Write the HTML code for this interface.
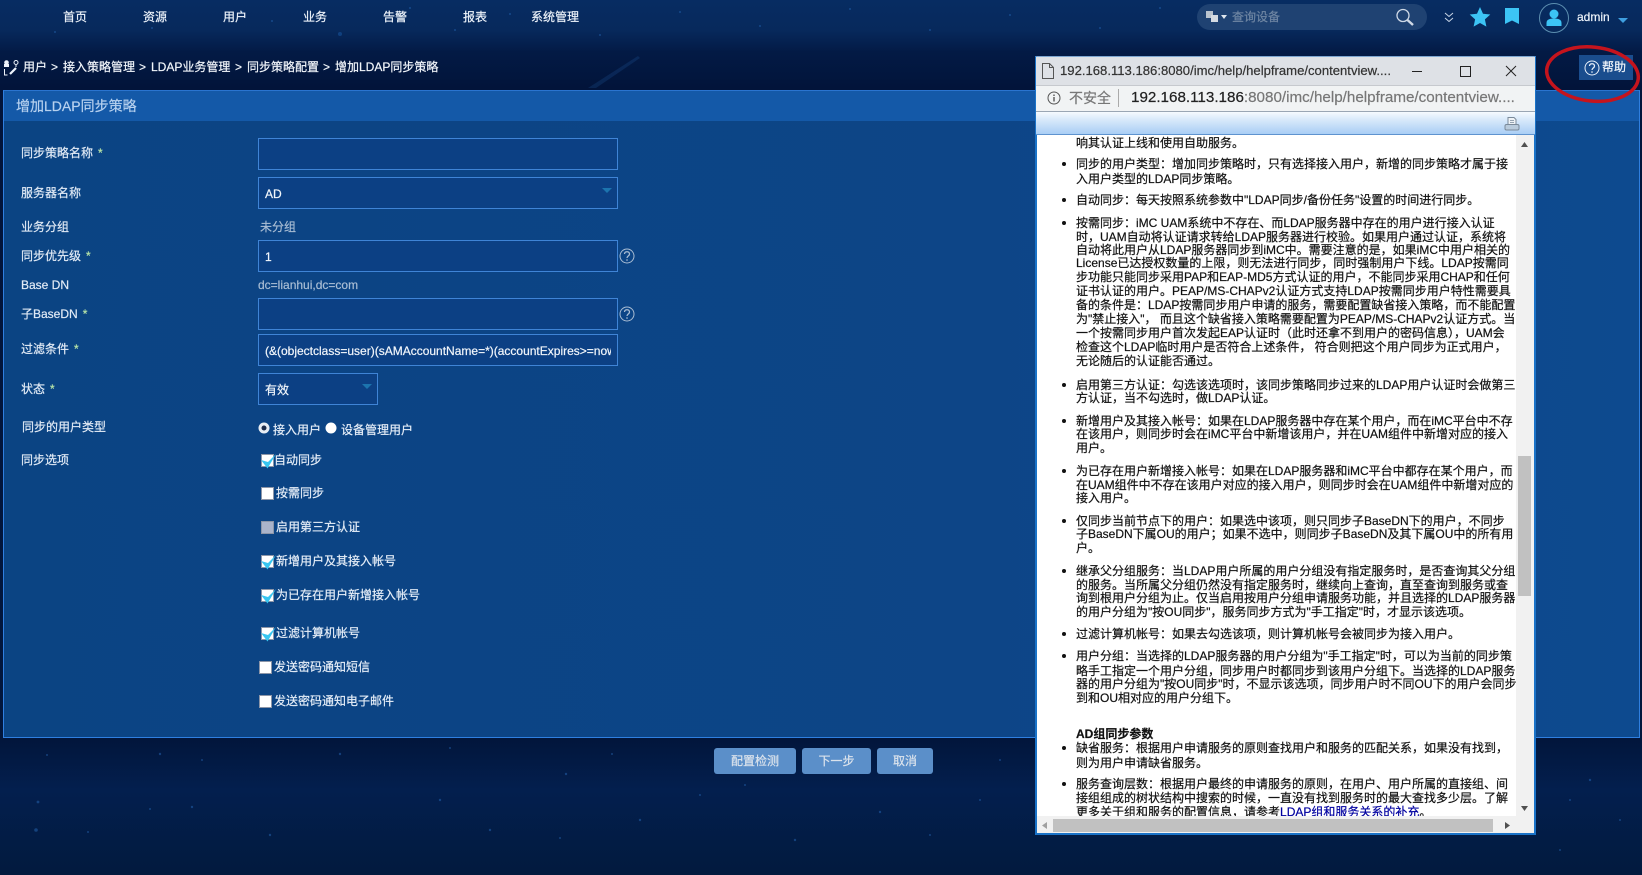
<!DOCTYPE html>
<html lang="zh"><head><meta charset="utf-8"><title>增加LDAP同步策略</title>
<style>
*{box-sizing:border-box}
html,body{margin:0;padding:0;width:1642px;height:875px;overflow:hidden;background:#02193d}
body{position:relative;font:12px/14px "Liberation Sans","Noto Sans CJK SC",sans-serif;color:#e6eef8;-webkit-text-stroke:.2px}
.a{position:absolute;white-space:nowrap}
#bg{position:absolute;left:0;top:0;width:1642px;height:875px;background:linear-gradient(180deg,#072c62 0,#07295c 30px,#031a45 52px,#02143a 88px,#02163c 740px,#031f4e 790px,#021a3e 875px)}
.t{position:absolute;white-space:nowrap;height:14px;line-height:14px;transform:translateY(-7px)}
.nav{width:80px;text-align:center;color:#eef4fb;top:17px}
.lab{left:21px;color:#e2ebf6}
.lab i{font-style:normal;color:#b9e6a8;margin-left:5px}
.in{position:absolute;left:258px;width:360px;height:32px;border:1px solid #3f84d6;background:#0c4084;color:#f2f6fb;padding:0 6px;line-height:33px;overflow:hidden;white-space:nowrap}
.caret{position:absolute;width:0;height:0;border-left:5px solid transparent;border-right:5px solid transparent;border-top:5px solid #1c74ae}
.ck{position:absolute;width:13px;height:13px;background:#fff;border:1px solid #8d96a8}
.ck svg{position:absolute;left:-1px;top:-1px}
.btn{position:absolute;top:748px;height:26px;background:#5b8fc9;border-radius:3px;color:#dbe3ec;text-align:center;line-height:26px}
#win{position:absolute;left:1035px;top:56px;width:501px;height:779px;background:#fff;border:2px solid #1a73c8;border-top:1px solid #7ea6d0;overflow:hidden}
#help{position:absolute;left:1037px;top:135px;width:479px;height:681px;overflow:hidden;background:#fff;color:#111;font:12px/14px "Liberation Sans","WenQuanYi Zen Hei","Noto Sans CJK SC",sans-serif}
#help div{position:absolute;left:39px;white-space:nowrap;height:14px;line-height:14px}
#help div.b:before{content:"";position:absolute;left:-14px;top:5px;width:4px;height:4px;border-radius:50%;background:#111}
</style></head><body>
<div id="bg"></div>
<svg class="a" style="left:0;top:0;opacity:.45" width="1642" height="875" fill="#2a6fc0">
<polygon points="588,88 596,88 640,58 638,56" fill="#2b74c4" opacity=".4"/>
<circle cx="340" cy="34" r="2" fill="#1c5fae"/><circle cx="272" cy="21" r="1"/><circle cx="152" cy="28" r="1"/><circle cx="55" cy="32" r="1"/><circle cx="242" cy="12" r="1"/><circle cx="410" cy="8" r="1"/><circle cx="455" cy="30" r="1"/><circle cx="510" cy="14" r="1"/><circle cx="600" cy="35" r="1"/><circle cx="680" cy="12" r="1"/><circle cx="760" cy="26" r="1"/><circle cx="850" cy="9" r="1"/><circle cx="930" cy="30" r="1"/><circle cx="1010" cy="15" r="1"/><circle cx="1100" cy="28" r="1"/><circle cx="1160" cy="8" r="1"/>
<circle cx="47" cy="755" r="1"/><circle cx="160" cy="754" r="1.2"/><circle cx="202" cy="760" r="1"/><circle cx="340" cy="754" r="1.2"/><circle cx="450" cy="748" r="1"/><circle cx="612" cy="754" r="1"/><circle cx="566" cy="774" r="1.2"/><circle cx="700" cy="795" r="1"/><circle cx="745" cy="785" r="1"/><circle cx="38" cy="802" r="1.4"/><circle cx="150" cy="809" r="1"/><circle cx="192" cy="807" r="1.2"/><circle cx="36" cy="830" r="1.8"/><circle cx="88" cy="832" r="1"/><circle cx="270" cy="835" r="1.2"/><circle cx="440" cy="800" r="1.2"/><circle cx="490" cy="830" r="1.2"/><circle cx="560" cy="838" r="1"/><circle cx="640" cy="820" r="1.2"/><circle cx="795" cy="840" r="1.2"/><circle cx="880" cy="812" r="1.2"/><circle cx="930" cy="835" r="1"/><circle cx="980" cy="800" r="1"/><circle cx="1000" cy="760" r="1"/><circle cx="1560" cy="850" r="1"/><circle cx="1590" cy="780" r="1.2"/><circle cx="1620" cy="820" r="1"/><circle cx="1570" cy="800" r="1"/>
</svg>

<div class="t nav" style="left:35px">首页</div>
<div class="t nav" style="left:115px">资源</div>
<div class="t nav" style="left:195px">用户</div>
<div class="t nav" style="left:275px">业务</div>
<div class="t nav" style="left:355px">告警</div>
<div class="t nav" style="left:435px">报表</div>
<div class="t nav" style="left:515px">系统管理</div>

<!-- search -->
<div class="a" style="left:1197px;top:4px;width:230px;height:26px;border-radius:13px;background:#1f4272"></div>
<svg class="a" style="left:1204px;top:9px" width="26" height="18"><rect x="2" y="2" width="7" height="7" fill="#b9c3ce"/><rect x="7" y="6" width="7" height="7" fill="#d5dbe2"/><path d="M17 6h6l-3 4z" fill="#dfe6ee"/></svg>
<div class="t" style="left:1232px;top:17px;color:#6f86a3">查询设备</div>
<svg class="a" style="left:1394px;top:7px" width="22" height="22" fill="none" stroke="#cfd9e6"><circle cx="9" cy="8.500" r="6" stroke-width="1.300"/><path d="M13.500 13l5.500 5" stroke-width="2.400"/></svg>
<svg class="a" style="left:1443px;top:11px" width="12" height="13" fill="none" stroke="#c9d6e6" stroke-width="1"><path d="M2 2l4 3.500 4-3.500M2 7l4 3.500 4-3.500"/></svg>
<svg class="a" style="left:1469px;top:6px" width="22" height="22"><path d="M11 1l3 6.700 7.300.8-5.400 4.900 1.500 7.200L11 17l-6.400 3.600 1.500-7.200L.700 8.500 8 7.700z" fill="#3cc4f5"/></svg>
<svg class="a" style="left:1505px;top:7px" width="14" height="18"><path d="M0 1h14v16l-7-3.500L0 17z" fill="#3cc4f5"/></svg>
<svg class="a" style="left:1538px;top:2px" width="32" height="32"><circle cx="16" cy="16" r="14.500" fill="none" stroke="#5d8fb0" stroke-width="1"/><circle cx="16" cy="12" r="4.500" fill="#3cc4f5"/><path d="M8.500 24v-3c0-3.500 3-4.500 7.500-4.500s7.500 1 7.500 4.500v3z" fill="#3cc4f5"/></svg>
<div class="t" style="left:1577px;top:17px;color:#eef4fb">admin</div>
<div class="caret" style="left:1618px;top:18px;border-top-color:#3f9fe0"></div>

<!-- breadcrumb -->
<svg class="a" style="left:3px;top:59px" width="18" height="18" fill="none" stroke="#eef4fb"><circle cx="3.500" cy="3.500" r="1.800" fill="#eef4fb"/><rect x="1" y="5" width="5" height="3" fill="#eef4fb" stroke="none"/><circle cx="13" cy="3.500" r="2" stroke-width="1"/><path d="M13 6v2M1.500 10v6h3" stroke-width="1"/><path d="M7 15l6-6" stroke-width="2.200"/></svg>
<div class="t" style="left:23px;top:67px;color:#f2f6fb">用户</div>
<div class="t" style="left:51px;top:67px;color:#f2f6fb">&gt;</div>
<div class="t" style="left:63px;top:67px;color:#f2f6fb">接入策略管理</div>
<div class="t" style="left:139px;top:67px;color:#f2f6fb">&gt;</div>
<div class="t" style="left:151px;top:67px;color:#f2f6fb">LDAP业务管理</div>
<div class="t" style="left:235px;top:67px;color:#f2f6fb">&gt;</div>
<div class="t" style="left:247px;top:67px;color:#f2f6fb">同步策略配置</div>
<div class="t" style="left:323px;top:67px;color:#f2f6fb">&gt;</div>
<div class="t" style="left:335px;top:67px;color:#f2f6fb">增加LDAP同步策略</div>

<!-- panel -->
<div class="a" style="left:3px;top:90px;width:1637px;height:648px;background:linear-gradient(90deg,#0b4483 0,#0d4587 60%,#0d4a8f 100%);border:1px solid #2f7fe0;border-top:1px solid #2a74cf"></div>
<div class="a" style="left:4px;top:91px;width:1635px;height:30px;background:#1459a8"></div>
<div class="t" style="left:16px;top:106px;font-size:14px;color:#b7d1ef">增加LDAP同步策略</div>

<div class="t lab" style="top:153px">同步策略名称<i>*</i></div>
<div class="in" style="top:138px"></div>
<div class="t lab" style="top:193px">服务器名称</div>
<div class="in" style="top:177px">AD<span class="caret" style="right:5px;top:10px"></span></div>
<div class="t lab" style="top:227px">业务分组</div>
<div class="t" style="left:260px;top:227px;color:#a9bdd4">未分组</div>
<div class="t lab" style="top:256px">同步优先级<i>*</i></div>
<div class="in" style="top:240px">1</div>
<svg class="a" style="left:619px;top:248px" width="16" height="16" fill="none" stroke="#a9bdd4"><circle cx="8" cy="8" r="7"/><path d="M5.500 6c0-3 5-3 5 0 0 2-2.500 2-2.500 4" stroke-width="1.300"/><path d="M8 11.300v1.500" stroke-width="1.300"/></svg>
<div class="t lab" style="top:285px">Base DN</div>
<div class="t" style="left:258px;top:285px;color:#a9bdd4">dc=lianhui,dc=com</div>
<div class="t lab" style="top:314px">子BaseDN<i>*</i></div>
<div class="in" style="top:298px"></div>
<svg class="a" style="left:619px;top:306px" width="16" height="16" fill="none" stroke="#a9bdd4"><circle cx="8" cy="8" r="7"/><path d="M5.500 6c0-3 5-3 5 0 0 2-2.500 2-2.500 4" stroke-width="1.300"/><path d="M8 11.300v1.500" stroke-width="1.300"/></svg>
<div class="t lab" style="top:349px">过滤条件<i>*</i></div>
<div class="in" style="top:334px"><span style="display:block;width:346px;overflow:hidden">(&amp;(objectclass=user)(sAMAccountName=*)(accountExpires&gt;=now)</span></div>
<div class="t lab" style="top:389px">状态<i>*</i></div>
<div class="in" style="top:373px;width:120px">有效<span class="caret" style="right:5px;top:10px"></span></div>
<div class="t lab" style="top:427px;left:22px">同步的用户类型</div>
<svg class="a" style="left:258px;top:422px" width="12" height="12"><circle cx="6" cy="6" r="5.500" fill="#e8edf3"/><circle cx="6" cy="6" r="2.500" fill="#1c2c4a"/></svg>
<div class="t" style="left:273px;top:430px">接入用户</div>
<svg class="a" style="left:325px;top:422px" width="12" height="12"><circle cx="6" cy="6" r="5.500" fill="#fff"/></svg>
<div class="t" style="left:341px;top:430px">设备管理用户</div>
<div class="t lab" style="top:460px">同步选项</div>

<div class="ck" style="left:261px;top:454px"><svg width="15" height="15"><path d="M0 6l6.500 8.500L15 0 7 8z" fill="#38c6f0"/></svg></div>
<div class="t" style="left:274px;top:460px">自动同步</div>
<div class="ck" style="left:261px;top:487px"></div>
<div class="t" style="left:276px;top:493px">按需同步</div>
<div class="ck" style="left:261px;top:521px;background:#aab4cb"></div>
<div class="t" style="left:276px;top:527px">启用第三方认证</div>
<div class="ck" style="left:261px;top:555px"><svg width="15" height="15"><path d="M0 6l6.500 8.500L15 0 7 8z" fill="#38c6f0"/></svg></div>
<div class="t" style="left:276px;top:561px">新增用户及其接入帐号</div>
<div class="ck" style="left:261px;top:589px"><svg width="15" height="15"><path d="M0 6l6.500 8.500L15 0 7 8z" fill="#38c6f0"/></svg></div>
<div class="t" style="left:276px;top:595px">为已存在用户新增接入帐号</div>
<div class="ck" style="left:261px;top:627px"><svg width="15" height="15"><path d="M0 6l6.500 8.500L15 0 7 8z" fill="#38c6f0"/></svg></div>
<div class="t" style="left:276px;top:633px">过滤计算机帐号</div>
<div class="ck" style="left:259px;top:661px"></div>
<div class="t" style="left:274px;top:667px">发送密码通知短信</div>
<div class="ck" style="left:259px;top:695px"></div>
<div class="t" style="left:274px;top:701px">发送密码通知电子邮件</div>

<div class="btn" style="left:714px;width:82px">配置检测</div>
<div class="btn" style="left:802px;width:69px">下一步</div>
<div class="btn" style="left:877px;width:56px">取消</div>

<!-- help button + circle -->
<div class="a" style="left:1579px;top:55px;width:54px;height:25px;background:#1a4d8e"></div>
<svg class="a" style="left:1584px;top:60px" width="16" height="16" fill="none" stroke="#e8f0fa"><circle cx="8" cy="8" r="7"/><path d="M5.500 6c0-3 5-3 5 0 0 2-2.500 2-2.500 4" stroke-width="1.300"/><path d="M8 11.300v1.500" stroke-width="1.300"/></svg>
<div class="t" style="left:1602px;top:67px;color:#f2f6fb">帮助</div>
<svg class="a" style="left:1540px;top:40px" width="102" height="70"><ellipse cx="52.500" cy="34" rx="46" ry="27" fill="none" stroke="#c5141d" stroke-width="3.500" transform="rotate(6 52 34)"/></svg>

<!-- popup -->
<div id="win"></div>
<div class="a" style="left:1036px;top:57px;width:499px;height:28px;background:#dee1e6"></div>
<div class="a" style="left:1036px;top:85px;width:499px;height:27px;background:#f1f3f4;border-top:1px solid #c6c9ce;border-bottom:1px solid #9aa6b4"></div>
<svg class="a" style="left:1041px;top:62px" width="14" height="18" fill="none" stroke="#555" stroke-width="1"><path d="M1.500 1.500h7l4 4v11h-11zM8.500 1.500v4h4"/></svg>
<div class="t" style="left:1060px;top:71px;font-size:13.100px;color:#333">192.168.113.186:8080/imc/help/helpframe/contentview....</div>
<svg class="a" style="left:1412px;top:62px" width="118" height="18" fill="none" stroke="#222" stroke-width="1"><path d="M0 9.500h10"/><rect x="48.500" y="4.500" width="10" height="10"/><path d="M94 4l10 10M104 4l-10 10"/></svg>
<svg class="a" style="left:1046px;top:90px" width="16" height="16" fill="none" stroke="#555"><circle cx="8" cy="8" r="6"/><path d="M8 7v4.500M8 4.500v1.500" stroke-width="1.400"/></svg>
<div class="t" style="left:1069px;top:98px;font-size:14px;color:#777">不安全</div>
<div class="a" style="left:1118px;top:89px;width:1px;height:18px;background:#aaa"></div>
<div class="t" style="left:1131px;top:98px;font-size:15.200px;color:#222">192.168.113.186<span style="color:#777">:8080/imc/help/helpframe/contentview....</span></div>
<div class="a" style="left:1036px;top:112px;width:499px;height:23px;background:linear-gradient(180deg,#f6fafe 0,#dcebfb 30%,#a9cef5 100%);border-bottom:1px solid #5e93cf"></div>
<svg class="a" style="left:1504px;top:116px" width="16" height="16" fill="none" stroke="#7a8a9a"><path d="M4 1.500h6l2 2v5H4z" fill="#eef2f6"/><path d="M6 4.500h4M6 6.500h4" stroke-width=".7"/><rect x="1" y="8.500" width="14" height="5.500" rx="1.500" fill="#b9cbdc"/></svg>

<div id="help">
<div style="top:1px">响其认证上线和使用自助服务。</div>
<div class="b" style="top:22px">同步的用户类型：增加同步策略时，只有选择接入用户，新增的同步策略才属于接</div>
<div style="top:37px">入用户类型的LDAP同步策略。</div>
<div class="b" style="top:58px">自动同步：每天按照系统参数中"LDAP同步/备份任务"设置的时间进行同步。</div>
<div class="b" style="top:81px">按需同步：iMC UAM系统中不存在、而LDAP服务器中存在的用户进行接入认证</div>
<div style="top:95px">时，UAM自动将认证请求转给LDAP服务器进行校验。如果用户通过认证，系统将</div>
<div style="top:108px">自动将此用户从LDAP服务器同步到iMC中。需要注意的是，如果iMC中用户相关的</div>
<div style="top:121px">License已达授权数量的上限，则无法进行同步，同时强制用户下线。LDAP按需同</div>
<div style="top:135px">步功能只能同步采用PAP和EAP-MD5方式认证的用户，不能同步采用CHAP和任何</div>
<div style="top:149px">证书认证的用户。PEAP/MS-CHAPv2认证方式支持LDAP按需同步用户特性需要具</div>
<div style="top:163px">备的条件是：LDAP按需同步用户申请的服务，需要配置缺省接入策略，而不能配置</div>
<div style="top:177px">为"禁止接入"， 而且这个缺省接入策略需要配置为PEAP/MS-CHAPv2认证方式。当</div>
<div style="top:191px">一个按需同步用户首次发起EAP认证时（此时还拿不到用户的密码信息），UAM会</div>
<div style="top:205px">检查这个LDAP临时用户是否符合上述条件， 符合则把这个用户同步为正式用户，</div>
<div style="top:219px">无论随后的认证能否通过。</div>
<div class="b" style="top:243px">启用第三方认证：勾选该选项时，该同步策略同步过来的LDAP用户认证时会做第三</div>
<div style="top:256px">方认证，当不勾选时，做LDAP认证。</div>
<div class="b" style="top:279px">新增用户及其接入帐号：如果在LDAP服务器中存在某个用户，而在iMC平台中不存</div>
<div style="top:292px">在该用户，则同步时会在iMC平台中新增该用户，并在UAM组件中新增对应的接入</div>
<div style="top:306px">用户。</div>
<div class="b" style="top:329px">为已存在用户新增接入帐号：如果在LDAP服务器和iMC平台中都存在某个用户，而</div>
<div style="top:343px">在UAM组件中不存在该用户对应的接入用户，则同步时会在UAM组件中新增对应的</div>
<div style="top:356px">接入用户。</div>
<div class="b" style="top:379px">仅同步当前节点下的用户：如果选中该项，则只同步子BaseDN下的用户，不同步</div>
<div style="top:392px">子BaseDN下属OU的用户；如果不选中，则同步子BaseDN及其下属OU中的所有用</div>
<div style="top:406px">户。</div>
<div class="b" style="top:429px">继承父分组服务：当LDAP用户所属的用户分组没有指定服务时，是否查询其父分组</div>
<div style="top:443px">的服务。当所属父分组仍然没有指定服务时，继续向上查询，直至查询到服务或查</div>
<div style="top:456px">询到根用户分组为止。仅当启用按用户分组申请服务功能，并且选择的LDAP服务器</div>
<div style="top:470px">的用户分组为"按OU同步"，服务同步方式为"手工指定"时，才显示该选项。</div>
<div class="b" style="top:492px">过滤计算机帐号：如果去勾选该项，则计算机帐号会被同步为接入用户。</div>
<div class="b" style="top:514px">用户分组：当选择的LDAP服务器的用户分组为"手工指定"时，可以为当前的同步策</div>
<div style="top:529px">略手工指定一个用户分组，同步用户时都同步到该用户分组下。当选择的LDAP服务</div>
<div style="top:542px">器的用户分组为"按OU同步"时，不显示该选项，同步用户时不同OU下的用户会同步</div>
<div style="top:556px">到和OU相对应的用户分组下。</div>
<div style="top:592px;font-weight:bold">AD组同步参数</div>
<div class="b" style="top:606px">缺省服务：根据用户申请服务的原则查找用户和服务的匹配关系，如果没有找到，</div>
<div style="top:621px">则为用户申请缺省服务。</div>
<div class="b" style="top:642px">服务查询层数：根据用户最终的申请服务的原则，在用户、用户所属的直接组、间</div>
<div style="top:656px">接组组成的树状结构中搜索的时候，一直没有找到服务时的最大查找多少层。了解</div>
<div style="top:670px">更多关于组和服务的配置信息，请参考<span style="color:#0000a0">LDAP组和服务关系的补充</span>。</div>
</div>

<!-- scrollbars -->
<div class="a" style="left:1516px;top:135px;width:18px;height:681px;background:#f1f1f1"></div>
<div class="a" style="left:1518px;top:456px;width:13px;height:140px;background:#c1c1c1"></div>
<svg class="a" style="left:1516px;top:140px" width="17" height="10"><path d="M5 7h7l-3.500-5z" fill="#505050"/></svg>
<svg class="a" style="left:1516px;top:803px" width="17" height="10"><path d="M5 3h7l-3.500 5z" fill="#505050"/></svg>
<div class="a" style="left:1037px;top:816px;width:497px;height:17px;background:#f1f1f1"></div>
<div class="a" style="left:1053px;top:819px;width:440px;height:13px;background:#c1c1c1"></div>
<svg class="a" style="left:1040px;top:820px" width="10" height="11"><path d="M7 2v7L2 5.500z" fill="#a0a0a0"/></svg>
<svg class="a" style="left:1502px;top:820px" width="10" height="11"><path d="M3 2v7l5-3.500z" fill="#505050"/></svg>
</body></html>
